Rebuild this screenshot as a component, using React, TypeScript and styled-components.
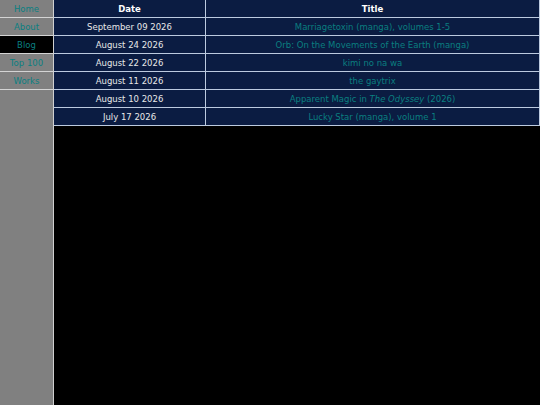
import React from "react";
import styled, { createGlobalStyle } from "styled-components";

const GlobalStyle = createGlobalStyle`
  html, body {
    margin: 0;
    padding: 0;
    background: #000;
    height: 100%;
  }
  #root {
    height: 100%;
  }
`;

type Entry = { date: string; title: React.ReactNode };

const entries: Entry[] = [
  { date: "September 09 2026", title: "Marriagetoxin (manga), volumes 1-5" },
  { date: "August 24 2026", title: "Orb: On the Movements of the Earth (manga)" },
  { date: "August 22 2026", title: "kimi no na wa" },
  { date: "August 11 2026", title: "the gaytrix" },
  {
    date: "August 10 2026",
    title: (
      <>
        Apparent Magic in <em>The Odyssey</em> (2026)
      </>
    ),
  },
  { date: "July 17 2026", title: "Lucky Star (manga), volume 1" },
];

const navItems = ["Home", "About", "Blog", "Top 100", "Works"];

export default function App() {
  return (
    <>
      <GlobalStyle />
      <Page>
        <Sidebar>
          {navItems.map((item) => (
            <NavItem key={item} $active={item === "Blog"}>
              <NavLink href="#">{item}</NavLink>
            </NavItem>
          ))}
        </Sidebar>
        <Main>
          <PostTable>
            <thead>
              <tr>
                <HeadCell $width="151px">Date</HeadCell>
                <HeadCell>Title</HeadCell>
              </tr>
            </thead>
            <tbody>
              {entries.map((e) => (
                <tr key={e.date}>
                  <Cell>{e.date}</Cell>
                  <Cell>
                    <TitleLink href="#">{e.title}</TitleLink>
                  </Cell>
                </tr>
              ))}
            </tbody>
          </PostTable>
        </Main>
      </Page>
    </>
  );
}

const Page = styled.div`
  display: flex;
  height: 100%;
  font-family: "DejaVu Sans", Verdana, sans-serif;
  font-size: 8.5px;
`;

const Sidebar = styled.nav`
  width: 53px;
  flex-shrink: 0;
  background: #808080;
  border-right: 1px solid #d0d0d0;
  display: flex;
  flex-direction: column;
`;

const NavItem = styled.div<{ $active?: boolean }>`
  height: 17px;
  line-height: 19px;
  text-align: center;
  background: ${(p) => (p.$active ? "#000" : "#808080")};
  border-bottom: 1px solid #d4d4d4;
`;

const NavLink = styled.a`
  color: #0a7f80;
  text-decoration: none;
`;

const Main = styled.main`
  flex: 1;
  background: #000;
`;

const PostTable = styled.table`
  width: 100%;
  border-collapse: collapse;
  background: #0b1c42;
`;

const HeadCell = styled.th<{ $width?: string }>`
  width: ${(p) => p.$width ?? "auto"};
  height: 16px;
  padding: 1px 0 0;
  color: #fff;
  font-weight: bold;
  text-align: center;
  border-bottom: 1px solid #bccadf;
  border-right: 1px solid #bccadf;
`;

const Cell = styled.td`
  height: 16px;
  padding: 1px 0 0;
  color: #e8e8e8;
  text-align: center;
  border-bottom: 1px solid #bccadf;
  border-right: 1px solid #bccadf;
`;

const TitleLink = styled.a`
  color: #0a7f80;
  text-decoration: none;
`;
